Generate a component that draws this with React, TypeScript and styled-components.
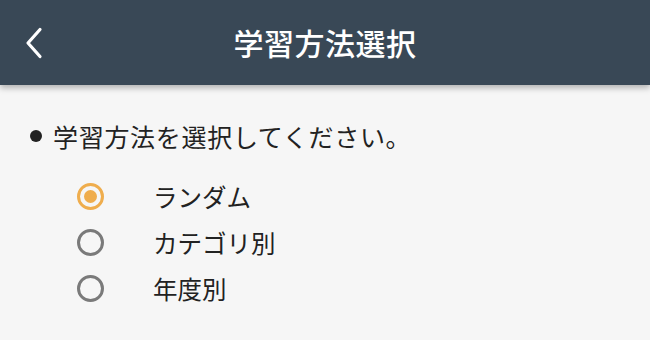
import React, { useState } from 'react';
import styled, { createGlobalStyle } from 'styled-components';

const GlobalStyle = createGlobalStyle`
  html, body {
    margin: 0;
    padding: 0;
    background: #f6f6f6;
  }
  body {
    font-family: 'Noto Sans CJK JP', 'Noto Sans', sans-serif;
    color: #222;
  }
`;

const Page = styled.div`
  width: 650px;
  height: 340px;
  overflow: hidden;
  background: #f6f6f6;
`;

const Header = styled.header`
  position: relative;
  height: 85px;
  background: #394856;
  box-shadow: 0 3px 6px rgba(0, 0, 0, 0.28);
  display: flex;
  align-items: center;
  justify-content: center;
`;

const BackButton = styled.button`
  position: absolute;
  left: 18px;
  top: 24px;
  width: 32px;
  height: 38px;
  padding: 0;
  border: none;
  background: transparent;
  display: flex;
  align-items: center;
  justify-content: center;
  cursor: pointer;
`;

const Title = styled.h1`
  margin: 0 0 2px;
  color: #fff;
  font-size: 30px;
  font-weight: 500;
  letter-spacing: 0.5px;
  line-height: 1;
`;

const Body = styled.main`
  padding: 34px 0 0 30px;
`;

const Prompt = styled.p`
  margin: 0;
  display: flex;
  align-items: center;
  gap: 11px;
  font-size: 25px;
  letter-spacing: 0.7px;
  line-height: 34px;
  color: #222;
`;

const Dot = styled.span`
  width: 12px;
  height: 12px;
  border-radius: 50%;
  background: #222;
  flex: none;
`;

const Options = styled.div`
  margin-top: 26px;
  padding-left: 47px;
  display: flex;
  flex-direction: column;
  gap: 12px;
`;

const Option = styled.label`
  display: flex;
  align-items: center;
  gap: 49px;
  height: 34px;
  font-size: 24.5px;
  color: #222;
  cursor: pointer;
`;

const Radio = styled.span<{ $checked: boolean }>`
  box-sizing: border-box;
  width: 27px;
  height: 27px;
  border-radius: 50%;
  border: 3px solid ${(p) => (p.$checked ? '#efad4d' : '#7a7a7a')};
  display: flex;
  align-items: center;
  justify-content: center;
  flex: none;

  &::after {
    content: '';
    width: 13px;
    height: 13px;
    border-radius: 50%;
    background: ${(p) => (p.$checked ? '#efad4d' : 'transparent')};
  }
`;

const methods = ['ランダム', 'カテゴリ別', '年度別'];

export default function App() {
  const [selected, setSelected] = useState(0);

  return (
    <Page>
      <GlobalStyle />
      <Header>
        <BackButton aria-label="戻る">
          <svg width="20" height="32" viewBox="0 0 20 32">
            <path d="M16 2.5 L4 16 L16 29.5" fill="none" stroke="#fff" strokeWidth="3.2" strokeLinecap="round" strokeLinejoin="round" />
          </svg>
        </BackButton>
        <Title>学習方法選択</Title>
      </Header>
      <Body>
        <Prompt>
          <Dot />
          学習方法を選択してください。
        </Prompt>
        <Options>
          {methods.map((m, i) => (
            <Option key={m} onClick={() => setSelected(i)}>
              <Radio $checked={selected === i} />
              {m}
            </Option>
          ))}
        </Options>
      </Body>
    </Page>
  );
}
